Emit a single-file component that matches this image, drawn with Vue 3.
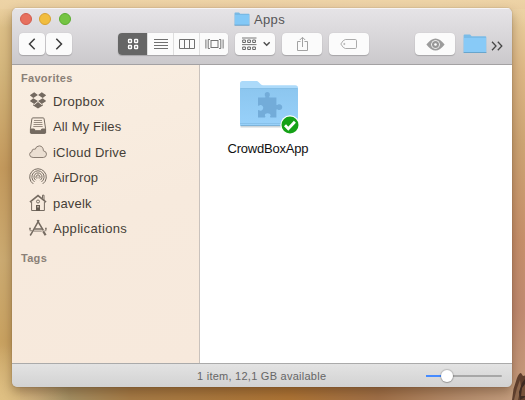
<script setup>
const favorites = [
  { id: 'dropbox', label: 'Dropbox', w: 51.2 },
  { id: 'files', label: 'All My Files', w: 68.2 },
  { id: 'cloud', label: 'iCloud Drive', w: 73.2 },
  { id: 'airdrop', label: 'AirDrop', w: 45 },
  { id: 'home', label: 'pavelk', w: 38.5 },
  { id: 'apps', label: 'Applications', w: 73.8 },
]
const zoomLevel = 27
</script>

<template>
  <div class="desktop">
    <svg class="wall-detail" width="14" height="28" viewBox="0 0 14 28">
      <path d="M1 28 2.500 17 6 6Q8 1 10 1l2 3 2-.5V28Z" fill="#60402f" />
      <path d="M3 28 6 16l3-8 1 7-3 13Z" fill="#8e684d" />
      <path d="m8 20 3-9 3-4v18l-5 3Z" fill="#3e2b23" /><path d="m10 24 1-8 3-4v12Z" fill="#77523b" />
    </svg>
    <main class="window">
      <header class="chrome">
        <div class="titlebar">
          <div class="lights">
            <i class="light close"></i><i class="light minimise"></i><i class="light expand"></i>
          </div>
          <div class="title">
            <svg width="16" height="14" viewBox="0 0 16 14">
              <path d="M.5 1.200Q.5.500 1.200.500H5l1.200 1.300h8.600q.7 0 .7.700v10.600H.5Z" fill="#79b9e4" />
              <path d="M1 3h14v10H1Z" fill="#83c8f6" />
              <path d="M.5 13.200h15" stroke="#649fc9" />
            </svg>
            <span>Apps</span>
          </div>
        </div>
        <div class="toolbar">
          <div class="nav">
            <button class="btn arrow">
              <svg width="10" height="14" viewBox="0 0 10 14"><path d="M7.700 1.700 2.500 7l5.200 5.300" fill="none" stroke="#3c3c3c" stroke-width="1.500" /></svg>
            </button>
            <button class="btn arrow">
              <svg width="10" height="14" viewBox="0 0 10 14"><path d="M2.300 1.700 7.500 7l-5.200 5.300" fill="none" stroke="#3c3c3c" stroke-width="1.500" /></svg>
            </button>
          </div>
          <div class="views">
            <button class="seg active">
              <svg width="12" height="12" viewBox="0 0 12 12" fill="none" stroke="#fff" stroke-width="1.300">
                <rect x="1.500" y="1.500" width="3" height="3" rx=".6" /><rect x="7.600" y="1.500" width="3" height="3" rx=".6" />
                <rect x="1.500" y="7.500" width="3" height="3" rx=".6" /><rect x="7.600" y="7.500" width="3" height="3" rx=".6" />
              </svg>
            </button>
            <button class="seg">
              <svg width="14" height="12" viewBox="0 0 14 12"><path d="M0 1.500h14M0 4.500h14M0 7.500h14M0 10.500h14" stroke="#707070" /></svg>
            </button>
            <button class="seg">
              <svg width="16" height="12" viewBox="0 0 16 12"><path d="M.5 1.500h15v9H.5ZM5.500 1.500v9M10.500 1.500v9" fill="none" stroke="#707070" /></svg>
            </button>
            <button class="seg last">
              <svg width="19" height="12" viewBox="0 0 19 12" fill="none" stroke="#747474">
                <path d="M.9 1.500v9M4.900 1.500H3.200v9h1.700M14.100 1.500h1.700v9h-1.700M18.100 1.500v9" /><rect x="6" y="2.500" width="7" height="7" />
              </svg>
            </button>
          </div>
          <button class="btn wide arrange">
            <svg width="28" height="14" viewBox="0 0 28 14" fill="none" stroke="#666">
              <path d="M0 1h14.500M0 7.600h14.500" stroke-width=".9" />
              <path d="M.7 3h2.700v2.500H.7ZM5.700 3h2.700v2.500H5.700ZM10.700 3h2.700v2.500h-2.700ZM.7 10h2.700v2.500H.7ZM5.700 10h2.700v2.500H5.700ZM10.700 10h2.700v2.500h-2.700Z" />
              <path d="m21.700 5.200 3 3 3-3" stroke="#4f4f4f" stroke-width="1.500" />
            </svg>
          </button>
          <button class="btn wide">
            <svg width="13" height="16" viewBox="0 0 13 16" fill="none" stroke="#a2a2a2">
              <path d="M4.500 5.500h-3v9h10v-9h-3M6.500 11V1.500M3.800 4 6.500 1.300 9.200 4" />
            </svg>
          </button>
          <button class="btn wide">
            <svg width="18" height="12" viewBox="0 0 18 12" fill="none" stroke="#ababab">
              <path d="M5.300 1.500h10q1.200 0 1.200 1.200v6.600q0 1.200-1.200 1.200h-10Q3.500 10.500 .8 6q2.700-4.500 4.500-4.500Z" /><circle cx="4.300" cy="6" r=".6" />
            </svg>
          </button>
          <button class="btn wide eye">
            <svg width="19" height="13" viewBox="0 0 19 13">
              <path d="M.4 6.500Q9.500-5.500 18.600 6.500Q9.500 18.500.4 6.500Z" fill="#9c9c9c" />
              <circle cx="9.500" cy="6.500" r="4.300" fill="#fff" /><circle cx="9.500" cy="6.500" r="3.500" fill="#979797" />
              <circle cx="9.500" cy="6.500" r="1.300" fill="#fff" />
            </svg>
          </button>
          <svg class="shortcut" width="24" height="20" viewBox="0 0 24 20">
            <path d="M.6 1.600Q.6.600 1.600.600H7l1.700 1.600h13.600q1 0 1 1V18.500H.6Z" fill="#7abce8" />
            <path d="M.9 4h22.100v14H.9Z" fill="#88caf7" /><path d="M.6 18.500h22.800" stroke="#68a5cc" />
          </svg>
          <svg class="more" width="12" height="12" viewBox="0 0 12 12"><path d="m1 1.800 4 4.200-4 4.200M6.800 1.800l4 4.200-4 4.200" fill="none" stroke="#484848" stroke-width="1.300" /></svg>
        </div>
      </header>

      <div class="body">
        <nav class="sidebar">
          <h2>Favorites</h2>
          <ul>
            <li v-for="item in favorites" :key="item.id">
              <svg class="icon" width="18" height="18" viewBox="0 0 18 18" fill="none" stroke="#756b61">
                <g v-if="item.id === 'dropbox'" fill="#746a60" stroke="none">
                  <path d="m5.200.300 3.700 2.700-4.600 2.900L.8 3.200ZM12.800.300l4.400 2.900-3.500 2.700-4.600-2.900ZM4.300 6.300l4.600 2.800-3.700 2.800L.8 9ZM13.700 6.300l3.500 2.700-4.400 2.900-3.700-2.800ZM9 10.100l3.700 2.900 1.200-.7v1.200L9 16.500l-4.900-3v-1.200l1.200.7Z" />
                </g>
                <g v-else-if="item.id === 'files'">
                  <path d="M3.700.900h10.600q.6 0 .8 1l1.500 9.900v3.700q0 .8-.8.800H2.200q-.8 0-.8-.8v-3.700l1.500-9.900q.2-1 .8-1Z" />
                  <path d="M1.500 12h3.800l1 1.700h5.400l1-1.700h3.800v3.500q0 .8-.8.800H2.200q-.7 0-.7-.8Z" fill="#756b61" />
                  <path d="M5 3.500h8M4.700 5.500h8.600M4.500 7.500h9M4.300 9.500h9.400" stroke="#8d8277" stroke-width=".9" />
                </g>
                <path v-else-if="item.id === 'cloud'" d="M4.100 14.500q-3.400-.1-3.500-3 .1-2.300 2.300-2.800-.2-2.400 2-2.600.7 0 1.200.3 1-3.400 4.200-3.500 4 .3 4.100 4.900 3.100.5 3.100 3.400-.2 3.200-3.200 3.300Z" fill="#ebdfd2" stroke="#897d72" />
                <g v-else-if="item.id === 'airdrop'">
                  <path d="M4.300 15.900a8.300 8.300 0 1 1 9.400 0M5.500 13.900a6.100 6.100 0 1 1 7 0M6.700 12.200a4 4 0 1 1 4.600 0M7.900 10.600a2 2 0 1 1 2.200 0" />
                  <circle cx="9" cy="9.100" r=".7" fill="#756b61" stroke="none" />
                </g>
                <g v-else-if="item.id === 'home'">
                  <path d="M.9 8.200 9 1.600l8.100 6.600" stroke-width="1.600" /><path d="M13.500 4.500V1.200h1.500V6M2.600 8v8.500h12.800V8" />
                  <circle cx="9" cy="7.500" r="1.500" /><path d="M7 11h4v6H7Z" fill="#645a50" stroke="none" /><path d="M8.300 12.100h1.400v1.500H8.300Z" fill="#d9cec1" stroke="none" />
                </g>
                <g v-else>
                  <path d="M10 1.200 3.700 12.300 1.200 16.500M8.200 1.200l6.200 10.300" stroke-width="1.500" />
                  <path d="M1 8.700v2M5.200 10h7.800M16.900 8.700v2" stroke-width="1.600" />
                  <path d="M.6 11.700h2.600M4.700 12.100h8.100M15.500 11.700h1.900" stroke-width=".8" />
                  <path d="m14.200 12.300 2.400 4" stroke-width="2.200" />
                </g>
              </svg>
              <svg class="label" width="120" height="20"><text x="0" y="14.500" :textLength="item.w">{{ item.label }}</text></svg>
            </li>
          </ul>
          <h2 class="tags">Tags</h2>
        </nav>
        <section class="content">
          <figure class="folder">
            <svg width="76" height="58" viewBox="0 0 76 58">
              <defs>
                <linearGradient id="front" x1="0" y1="0" x2="0" y2="1"><stop offset="0" stop-color="#8cc6ef" /><stop offset="1" stop-color="#98d1fa" /></linearGradient>
              </defs>
              <path d="M9.500 47.800h57" stroke="#cdd5da" stroke-width="1.500" />
              <path d="M9 4.500q0-2.500 2.500-2.500h14q1.200 0 2 .9l2.500 2.600q.8.800 2 .8h32.200Q67 6.300 67 8.800V46H9Z" fill="#acdafa" />
              <path d="M9 10Q9 9 10 9h56q1 0 1 1v35.500q0 1.500-1.500 1.500h-55Q9 47 9 45.500Z" fill="url(#front)" />
              <path d="M9.500 9.500h57" stroke="#86bfe6" /><path d="M9 44.500h58" stroke="#87c1ea" /><path d="M9.500 46.500h57" stroke="#7db3d9" />
              <path d="M27 18.500h7.200q.7-.7-.4-2.100c-.8-4.400 5.800-4.400 5 0q-1.100 1.400-.4 2.100h7v7.200q.7.700 2.100-.4c5-.8 5 6.500 0 5.700q-1.400-1.100-2.100-.4V38.500h-6q-1-.7.200-2.100c.2-3-6.200-3-5.700 0q1.200 1.400.1 2.100H27v-7.200q.7-.7 2.100.4c4.200.4 4.200-6 0-5.600q-1.400 1.100-2.100.4Z" fill="#73acd9" />
              <circle cx="59" cy="46" r="9.700" fill="#fff" /><circle cx="59" cy="46" r="8.500" fill="#15a117" />
              <path d="m54 46.200 3.300 3.500 6.600-7" fill="none" stroke="#fff" stroke-width="2.800" />
            </svg>
            <figcaption><svg width="84" height="18"><text x=".5" y="13" textLength="81">CrowdBoxApp</text></svg></figcaption>
          </figure>
        </section>
      </div>

      <footer class="status">
        <svg class="summary" width="132" height="18"><text x="1" y="13" textLength="129">1 item, 12,1 GB available</text></svg>
        <div class="slider"><div class="fill" :style="{ width: zoomLevel + '%' }"><i class="knob"></i></div></div>
      </footer>
    </main>
  </div>
</template>

<style>
body { margin: 0; }
</style>

<style scoped>
* { box-sizing: border-box; }
.desktop {
  position: relative;
  width: 525px;
  height: 400px;
  padding: 8px 13px 13px 12px;
  overflow: hidden;
  font-family: "Liberation Sans", Arial, sans-serif;
  background:
    linear-gradient(180deg, #edd3a6 0, rgba(237, 211, 166, 0) 28px),
    radial-gradient(ellipse 70px 55px at 0 100%, #dfc083 0, rgba(223, 192, 131, 0) 100%),
    linear-gradient(90deg, transparent 0, #a39065 12%, #a67b46 25%, #ad7435 55%, #a07048 72%, #b58d6d 88%, #c8a283 100%) 0 380px / 525px 20px no-repeat,
    linear-gradient(90deg, #e8cd9b 0, #e8c397 25%, #e6bd9b 50%, #efcfad 68%, #ecd2a6 84%, #e5c495 100%) 0 0 / 525px 9px no-repeat,
    linear-gradient(180deg, #e3c68f 0, #d4b67c 18%, #c49a5d 42%, #ccab72 65%, #c9a261 85%, #d5b478 100%) 0 0 / 20px 400px no-repeat,
    linear-gradient(180deg, #ecd4a3 0, #dcb684 18%, #cda473 36%, #c68f6a 60%, #c08a70 77%, #c69d7d 100%);
}
.wall-detail { position: absolute; right: 0; bottom: 0; width: 14px; height: 28px; }
.window {
  position: relative;
  display: flex;
  flex-direction: column;
  width: 500px;
  height: 379px;
  border-radius: 5px;
  overflow: hidden;
  box-shadow: 0 0 1px rgba(60, 40, 20, .65), 0 5px 11px rgba(65, 38, 14, .38);
}
.chrome {
  height: 57px;
  flex: none;
  background: linear-gradient(#e6e4e7, #cbc9cc);
  border-bottom: 1px solid #a3a1a3;
  box-shadow: inset 0 1px #f6f4f5;
}
.titlebar { height: 25px; display: grid; grid-template-columns: 222px 1fr; }
.lights { display: flex; gap: 7.500px; padding: 4.500px 0 0 7.500px; }
.light { width: 12px; height: 12px; border-radius: 50%; border: 1px solid; }
.close { background: #e7705e; border-color: #d15b4d; }
.minimise { background: #f1bd3e; border-color: #d7a132; }
.expand { background: #75c443; border-color: #5bac31; }
.title { display: flex; gap: 4px; padding-top: 4px; color: #565557; font-size: 13px; line-height: 15px; letter-spacing: .35px; }
.toolbar { height: 22px; display: flex; align-items: center; padding: 0 9px 0 7px; }
button { margin: 0; padding: 0; border: 0; font: inherit; display: flex; align-items: center; justify-content: center; }
.btn, .views { height: 22px; border-radius: 4px; box-shadow: 0 1px 1px rgba(0, 0, 0, .18), 0 0 1px rgba(0, 0, 0, .16); }
.btn { background: #fbfbfb; }
.nav { display: flex; gap: 1px; }
.arrow { width: 26px; }
.views { width: 110px; display: flex; overflow: hidden; margin: 0 7px 0 46px; background: #fbfbfb; }
.seg { width: 26px; height: 22px; background: #fbfbfb; border-left: 1px solid #dedede; }
.seg.active { width: 29px; background: #666; border: 0; }
.seg.last { width: 29px; }
.wide { width: 40px; margin-right: 7px; }
.arrange { padding-left: 2px; }
.eye { margin: 0 8px 0 39px; }
.more { margin: 4px 0 0 4px; }
.body { flex: 1; display: grid; grid-template-columns: 188px 1fr; background: #fff; }
.sidebar { background: linear-gradient(165deg, #f9eee1 0, #f7eadd 50%, #f7e9dc 100%); border-right: 1px solid #c9c2bd; padding: 7px 0 0 9px; }
h2 { margin: 0; font-size: 11px; line-height: 13px; letter-spacing: .3px; font-weight: bold; color: #8a8077; }
ul { list-style: none; margin: 3px 0 0; padding: 0; }
li { display: flex; align-items: center; height: 25.500px; padding-left: 8px; gap: 6px; }
.label { font-size: 13px; fill: #453e37; }
.tags { margin-top: 11px; }
.content { padding: 14px 0 0 19px; }
.folder { margin: 0; width: 100px; display: flex; flex-direction: column; align-items: center; }
figcaption { height: 18px; margin-top: 3px; font-size: 13px; fill: #111; }
.status { height: 24px; flex: none; display: flex; align-items: center; padding: 0 10px 0 184px; border-top: 1px solid #aaa; background: linear-gradient(#e3e3e3, #d2d2d2); }
.summary { font-size: 11px; fill: #666; }
.slider { width: 76px; height: 2px; margin-left: auto; background: #a7a7a7; border-radius: 1px; }
.fill { position: relative; height: 2px; background: #468bff; }
.knob { position: absolute; right: -6px; top: -5px; width: 12px; height: 12px; border-radius: 50%; background: #fff; box-shadow: 0 0 1px 1px rgba(0, 0, 0, .16), 0 1px 1px rgba(0, 0, 0, .15); }
</style>
